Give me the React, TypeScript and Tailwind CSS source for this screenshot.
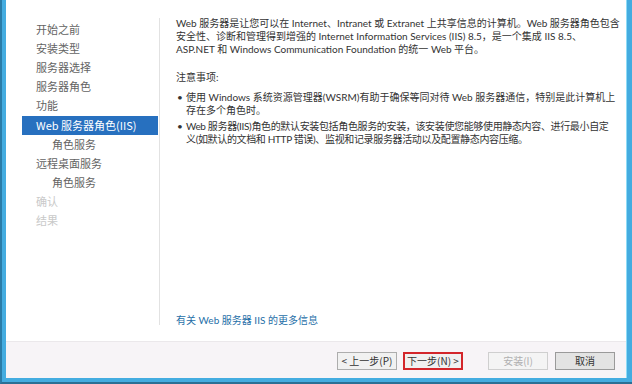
import React from "react";

const font = { fontFamily: '"Noto Sans CJK SC", "Noto Sans", sans-serif' };
const contentFont = { fontFamily: 'Lato, "Noto Sans CJK SC", sans-serif' };

function NavItem({ label, indent, active, disabled }: { label: string; indent?: boolean; active?: boolean; disabled?: boolean }) {
  return (
    <div
      className={
        "h-[19px] ml-[16px] w-[136px] flex items-center text-[11px] leading-none whitespace-nowrap " +
        (indent ? "pl-[30px] " : "pl-[14px] ") +
        (active ? "bg-[#2770bf] text-white h-[18px] my-[0.5px]" : disabled ? "text-[#c9c9c9]" : "text-[#636363]")
      }
    >
      {label}
    </div>
  );
}

function Btn({ children, kind }: { children: React.ReactNode; kind: "normal" | "next" | "disabled" | "cancel" }) {
  const cls =
    kind === "next"
      ? "border-2 border-[#d3262b] bg-[#f0f0f0] text-[#333]"
      : kind === "disabled"
      ? "border border-[#cfcfcf] bg-[#f4f4f4] text-[#b0b0b0]"
      : kind === "cancel"
      ? "border border-[#9a9a9a] bg-[#e3e3e3] text-[#333]"
      : "border border-[#adadad] bg-[#f1f1f1] text-[#333]";
  return (
    <div className={"w-[60px] h-[18px] flex items-center justify-center text-[10px] leading-none whitespace-nowrap " + cls}>
      {children}
    </div>
  );
}

export default function App() {
  return (
    <div
      className="w-[632px] h-[384px] flex flex-col bg-[#44ace0] border-l-2 border-l-[#2a7ca8] border-b-2 border-b-[#2b6f94] pl-[4px] pr-[5px] pb-[4px] overflow-hidden"
      style={font}
    >
      <div className="flex-1 flex flex-col bg-white border-r border-r-[#8fdcf7]">
        <div className="flex-1 flex min-h-0">
          <div className="w-[153px] pt-[20px] flex flex-col">
            <NavItem label="开始之前" />
            <NavItem label="安装类型" />
            <NavItem label="服务器选择" />
            <NavItem label="服务器角色" />
            <NavItem label="功能" />
            <NavItem label="Web 服务器角色(IIS)" active />
            <NavItem label="角色服务" indent />
            <NavItem label="远程桌面服务" />
            <NavItem label="角色服务" indent />
            <NavItem label="确认" disabled />
            <NavItem label="结果" disabled />
          </div>
          <div className="w-px bg-[#e2e2e2] mt-[18px] mb-[16px]" />
          <div
            className="flex-1 flex flex-col pl-[16px] pt-[17px] text-[10px] leading-[13px] text-[#333333] whitespace-nowrap"
            style={contentFont}
          >
            <p>
              Web 服务器是让您可以在 Internet、Intranet 或 Extranet 上共享信息的计算机。Web 服务器角色包含
              <br />
              安全性、诊断和管理得到增强的 Internet Information Services (IIS) 8.5，是一个集成 IIS 8.5、
              <br />
              ASP.NET 和 Windows Communication Foundation 的统一 Web 平台。
            </p>
            <p className="mt-[15px]">注意事项:</p>
            <div className="mt-[7px] flex">
              <span className="w-[10px] pl-[1px]">•</span>
              <p>
                使用 Windows 系统资源管理器(WSRM)有助于确保等同对待 Web 服务器通信，特别是此计算机上
                <br />
                存在多个角色时。
              </p>
            </div>
            <div className="mt-[3px] flex">
              <span className="w-[10px] pl-[1px]">•</span>
              <p className="tracking-[-0.35px]">
                Web 服务器(IIS)角色的默认安装包括角色服务的安装，该安装使您能够使用静态内容、进行最小自定
                <br />
                义(如默认的文档和 HTTP 错误)、监视和记录服务器活动以及配置静态内容压缩。
              </p>
            </div>
            <p className="mt-auto mb-[14px] text-[#1f6fa8]">有关 Web 服务器 IIS 的更多信息</p>
          </div>
        </div>
        <div className="h-[37px] border-t border-t-[#ebe8eb] bg-[#f7f4f7] flex items-start pt-[10px] pr-[11px] justify-end">
          <Btn kind="normal">&lt; 上一步(P)</Btn>
          <div className="ml-[6px]">
            <Btn kind="next">下一步(N) &gt;</Btn>
          </div>
          <div className="ml-[25px]">
            <Btn kind="disabled">安装(I)</Btn>
          </div>
          <div className="ml-[7px]">
            <Btn kind="cancel">取消</Btn>
          </div>
        </div>
      </div>
    </div>
  );
}
